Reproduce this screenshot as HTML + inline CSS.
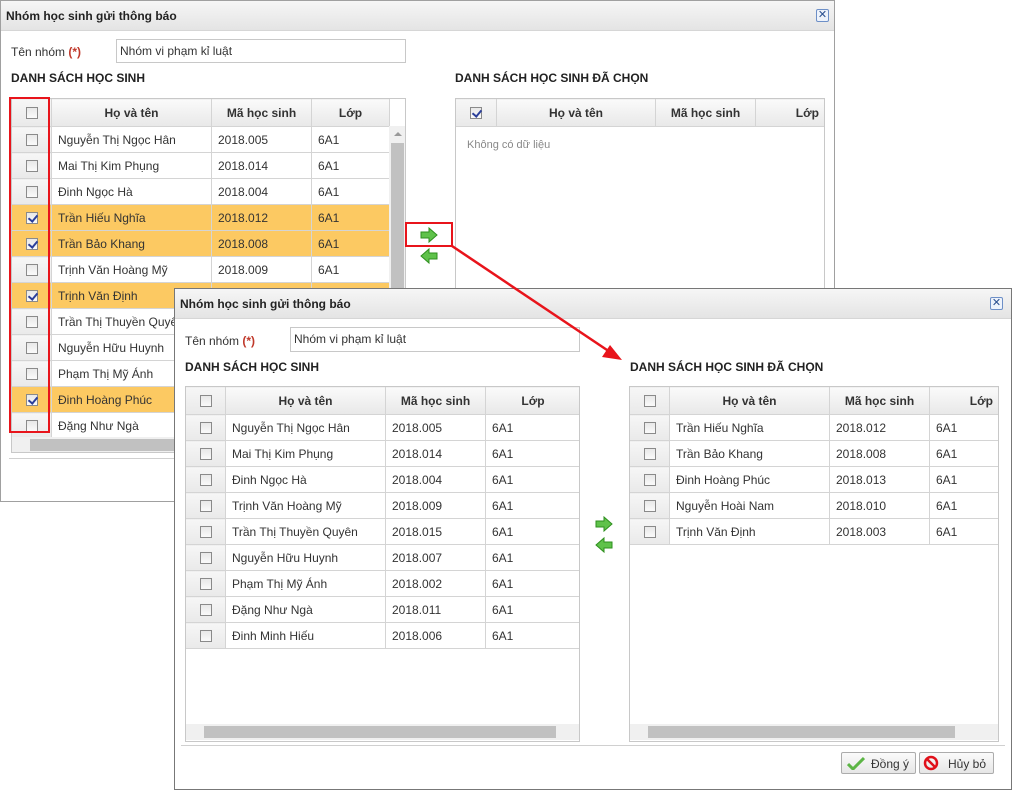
<!DOCTYPE html>
<html><head><meta charset="utf-8">
<style>
*{box-sizing:border-box;margin:0;padding:0}
body{width:1013px;height:792px;background:#fff;position:relative;overflow:hidden;font-family:"Liberation Sans","DejaVu Sans",sans-serif;font-size:12px;color:#333}
.a{position:absolute}
.dlg{position:absolute;background:#fff;border:1px solid #a0a0a0}
.tb{position:absolute;left:0;right:0;top:0;height:30px;background:linear-gradient(#f6f6f6,#e4e4e4);border-bottom:1px solid #d6d6d6}
.tt{position:absolute;left:5px;top:8px;font-weight:bold;font-size:12px;color:#222}
.cl{position:absolute;width:13px;height:13px;border:1px solid #6d8fc7;background:#eef3fb;border-radius:2px;color:#2a4f8f;font-size:11px;line-height:10px;text-align:center}
.lbl{position:absolute;font-size:12px;color:#333}
.req{color:#c0392b;font-weight:bold}
.inp{position:absolute;border:1px solid #c8c8c8;height:24px;padding:4px 3px;font-size:12px;color:#333;background:#fff}
.h{position:absolute;font-weight:bold;font-size:12px;color:#222}
.grid{position:absolute;border:1px solid #c8c8c8;background:#fff;overflow:hidden}
table{border-collapse:collapse;table-layout:fixed;position:absolute;left:-1px;top:-1px}
td,th{height:26px;border:1px solid #d4d4d4;padding:0 6px;white-space:nowrap;overflow:hidden;font-size:12px;font-weight:normal;text-align:left}
th{height:28px;background:linear-gradient(#fafafa,#e8e8e8);font-weight:bold;text-align:center;color:#333}
td.c,th.c{background:linear-gradient(#f6f6f6,#e9e9e9);text-align:center;padding:0}
tr.s td{background:#fcc962}
tr.s td.c{background:#fcc962}
.cb{display:inline-block;width:12px;height:12px;border:1px solid #8a8a8a;background:linear-gradient(#e8e8e8,#fafafa);vertical-align:middle;position:relative}
.cb.k:after{content:"";position:absolute;left:3px;top:0px;width:4px;height:7px;border:solid #2b3f9a;border-width:0 2px 2px 0;transform:rotate(40deg)}
.hs{position:absolute;left:0;right:0;height:16px;background:#f0f0f0}
.thumb{position:absolute;top:2px;height:12px;background:#c1c1c1}
.btn{position:absolute;height:22px;border:1px solid #acacac;border-radius:2px;background:linear-gradient(#fbfbfb,#e6e6e6);font-size:12px;color:#333}
</style></head><body>

<div class="dlg" style="left:0;top:0;width:835px;height:502px">
 <div class="tb"><div class="tt">Nhóm học sinh gửi thông báo</div></div>
 <div class="cl" style="left:815px;top:8px">✕</div>
 <div class="lbl" style="left:10px;top:44px">Tên nhóm <span class="req">(*)</span></div>
 <div class="inp" style="left:115px;top:38px;width:290px">Nhóm vi phạm kỉ luật</div>
 <div class="h" style="left:10px;top:70px">DANH SÁCH HỌC SINH</div>
 <div class="grid" style="left:10px;top:97px;width:395px;height:355px">
  <table style="width:378px">
   <colgroup><col style="width:40px"><col style="width:160px"><col style="width:100px"><col style="width:78px"></colgroup>
   <tr><th class="c"><span class="cb"></span></th><th>Họ và tên</th><th>Mã học sinh</th><th>Lớp</th></tr>
   <tr><td class="c"><span class="cb"></span></td><td>Nguyễn Thị Ngọc Hân</td><td>2018.005</td><td>6A1</td></tr>
   <tr><td class="c"><span class="cb"></span></td><td>Mai Thị Kim Phụng</td><td>2018.014</td><td>6A1</td></tr>
   <tr><td class="c"><span class="cb"></span></td><td>Đinh Ngọc Hà</td><td>2018.004</td><td>6A1</td></tr>
   <tr class="s"><td class="c"><span class="cb k"></span></td><td>Trần Hiếu Nghĩa</td><td>2018.012</td><td>6A1</td></tr>
   <tr class="s"><td class="c"><span class="cb k"></span></td><td>Trần Bảo Khang</td><td>2018.008</td><td>6A1</td></tr>
   <tr><td class="c"><span class="cb"></span></td><td>Trịnh Văn Hoàng Mỹ</td><td>2018.009</td><td>6A1</td></tr>
   <tr class="s"><td class="c"><span class="cb k"></span></td><td>Trịnh Văn Định</td><td>2018.003</td><td>6A1</td></tr>
   <tr><td class="c"><span class="cb"></span></td><td>Trần Thị Thuyền Quyên</td><td>2018.015</td><td>6A1</td></tr>
   <tr><td class="c"><span class="cb"></span></td><td>Nguyễn Hữu Huynh</td><td>2018.007</td><td>6A1</td></tr>
   <tr><td class="c"><span class="cb"></span></td><td>Phạm Thị Mỹ Ánh</td><td>2018.002</td><td>6A1</td></tr>
   <tr class="s"><td class="c"><span class="cb k"></span></td><td>Đinh Hoàng Phúc</td><td>2018.013</td><td>6A1</td></tr>
   <tr><td class="c"><span class="cb"></span></td><td>Đặng Như Ngà</td><td>2018.011</td><td>6A1</td></tr>
  </table>
  <div class="a" style="left:377px;top:27px;width:17px;height:311px;background:#f0f0f0"><div class="a" style="left:2px;top:17px;width:13px;height:290px;background:#c1c1c1"></div><div class="a" style="left:5px;top:6px;border:4px solid transparent;border-bottom-color:#999;border-top:0"></div></div>
  <div class="hs" style="top:338px"><div class="thumb" style="left:18px;width:360px"></div></div>
 </div>
 <div class="a" style="left:0;right:0;top:457px;height:1px;background:#d0d0d0;margin:0 8px"></div>
 <div class="h" style="left:454px;top:70px">DANH SÁCH HỌC SINH ĐÃ CHỌN</div>
 <div class="grid" style="left:454px;top:97px;width:370px;height:360px">
  <table style="width:370px">
   <colgroup><col style="width:41px"><col style="width:159px"><col style="width:100px"><col style="width:70px"></colgroup>
   <tr><th class="c"><span class="cb k"></span></th><th>Họ và tên</th><th>Mã học sinh</th><th style="text-align:right">Lớp</th></tr>
  </table>
  <div class="a" style="left:11px;top:40px;color:#888;font-size:11px">Không có dữ liệu</div>
 </div>
 <svg class="a" style="left:418px;top:226px" width="20" height="40" viewBox="0 0 20 40">
  <path d="M2 5h8V1l8 7-8 7v-4H2z" fill="#5fc24a" stroke="#2e8f1e" stroke-width="1"/>
  <path d="M18 26h-8v-4l-8 7 8 7v-4h8z" fill="#5fc24a" stroke="#2e8f1e" stroke-width="1"/>
 </svg>
</div>

<div class="a" style="left:9px;top:97px;width:41px;height:336px;border:2px solid #e8141b"></div>
<div class="a" style="left:405px;top:222px;width:48px;height:25px;border:2px solid #e8141b"></div>

<div class="dlg" style="left:174px;top:288px;width:838px;height:502px;border-color:#777">
 <div class="tb"><div class="tt">Nhóm học sinh gửi thông báo</div></div>
 <div class="cl" style="left:815px;top:8px">✕</div>
 <div class="lbl" style="left:10px;top:45px">Tên nhóm <span class="req">(*)</span></div>
 <div class="inp" style="left:115px;top:38px;width:290px;height:25px">Nhóm vi phạm kỉ luật</div>
 <div class="h" style="left:10px;top:71px">DANH SÁCH HỌC SINH</div>
 <div class="grid" style="left:10px;top:97px;width:395px;height:356px">
  <table style="width:395px">
   <colgroup><col style="width:40px"><col style="width:160px"><col style="width:100px"><col style="width:95px"></colgroup>
   <tr><th class="c"><span class="cb"></span></th><th>Họ và tên</th><th>Mã học sinh</th><th>Lớp</th></tr>
   <tr><td class="c"><span class="cb"></span></td><td>Nguyễn Thị Ngọc Hân</td><td>2018.005</td><td>6A1</td></tr>
   <tr><td class="c"><span class="cb"></span></td><td>Mai Thị Kim Phụng</td><td>2018.014</td><td>6A1</td></tr>
   <tr><td class="c"><span class="cb"></span></td><td>Đinh Ngọc Hà</td><td>2018.004</td><td>6A1</td></tr>
   <tr><td class="c"><span class="cb"></span></td><td>Trịnh Văn Hoàng Mỹ</td><td>2018.009</td><td>6A1</td></tr>
   <tr><td class="c"><span class="cb"></span></td><td>Trần Thị Thuyền Quyên</td><td>2018.015</td><td>6A1</td></tr>
   <tr><td class="c"><span class="cb"></span></td><td>Nguyễn Hữu Huynh</td><td>2018.007</td><td>6A1</td></tr>
   <tr><td class="c"><span class="cb"></span></td><td>Phạm Thị Mỹ Ánh</td><td>2018.002</td><td>6A1</td></tr>
   <tr><td class="c"><span class="cb"></span></td><td>Đặng Như Ngà</td><td>2018.011</td><td>6A1</td></tr>
   <tr><td class="c"><span class="cb"></span></td><td>Đinh Minh Hiếu</td><td>2018.006</td><td>6A1</td></tr>
  </table>
  <div class="hs" style="top:337px"><div class="thumb" style="left:18px;width:352px"></div></div>
 </div>
 <div class="h" style="left:455px;top:71px">DANH SÁCH HỌC SINH ĐÃ CHỌN</div>
 <div class="grid" style="left:454px;top:97px;width:370px;height:356px">
  <table style="width:370px">
   <colgroup><col style="width:40px"><col style="width:160px"><col style="width:100px"><col style="width:70px"></colgroup>
   <tr><th class="c"><span class="cb"></span></th><th>Họ và tên</th><th>Mã học sinh</th><th style="text-align:right">Lớp</th></tr>
   <tr><td class="c"><span class="cb"></span></td><td>Trần Hiếu Nghĩa</td><td>2018.012</td><td>6A1</td></tr>
   <tr><td class="c"><span class="cb"></span></td><td>Trần Bảo Khang</td><td>2018.008</td><td>6A1</td></tr>
   <tr><td class="c"><span class="cb"></span></td><td>Đinh Hoàng Phúc</td><td>2018.013</td><td>6A1</td></tr>
   <tr><td class="c"><span class="cb"></span></td><td>Nguyễn Hoài Nam</td><td>2018.010</td><td>6A1</td></tr>
   <tr><td class="c"><span class="cb"></span></td><td>Trịnh Văn Định</td><td>2018.003</td><td>6A1</td></tr>
  </table>
  <div class="hs" style="top:337px"><div class="thumb" style="left:18px;width:307px"></div></div>
 </div>
 <svg class="a" style="left:419px;top:227px" width="20" height="40" viewBox="0 0 20 40">
  <path d="M2 5h8V1l8 7-8 7v-4H2z" fill="#5fc24a" stroke="#2e8f1e" stroke-width="1"/>
  <path d="M18 26h-8v-4l-8 7 8 7v-4h8z" fill="#5fc24a" stroke="#2e8f1e" stroke-width="1"/>
 </svg>
 <div class="a" style="left:6px;right:6px;top:456px;height:1px;background:#d0d0d0"></div>
 <div class="btn" style="left:666px;top:463px;width:75px">
  <svg class="a" style="left:5px;top:3px" width="18" height="14"><path d="M1 8l5 5L17 2" fill="none" stroke="#5cb545" stroke-width="3"/></svg>
  <span class="a" style="left:29px;top:4px">Đồng ý</span></div>
 <div class="btn" style="left:744px;top:463px;width:75px">
  <svg class="a" style="left:3px;top:2px" width="16" height="16"><circle cx="8" cy="8" r="6" fill="none" stroke="#e0101a" stroke-width="2.5"/><path d="M4 4l8 8" stroke="#e0101a" stroke-width="2.5"/></svg>
  <span class="a" style="left:28px;top:4px">Hủy bỏ</span></div>
</div>

<svg class="a" style="left:0;top:0" width="1013" height="792">
 <line x1="452" y1="246" x2="610" y2="352" stroke="#e8141b" stroke-width="2.5"/>
 <path d="M622 360l-20-3 8-12z" fill="#e8141b"/>
</svg>
</body></html>
